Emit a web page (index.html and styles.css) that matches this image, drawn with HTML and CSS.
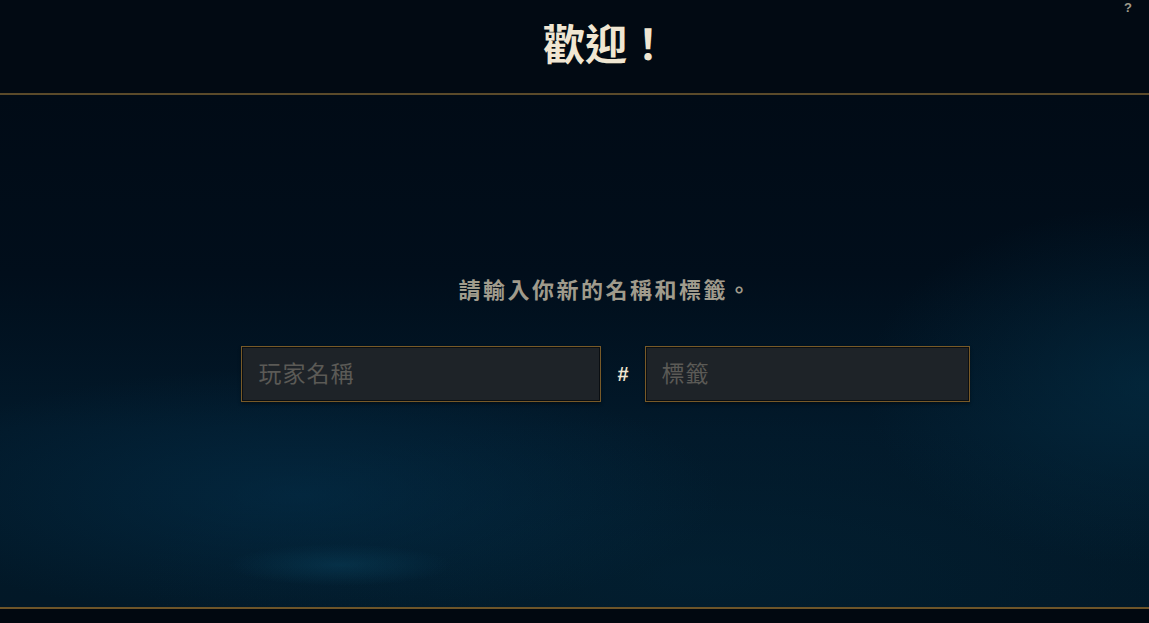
FILE: index.html
```html
<!DOCTYPE html>
<html lang="zh-Hant">
<head>
    <meta charset="UTF-8">
    <meta name="viewport" content="width=device-width, initial-scale=1.0">
    <title>歡迎！</title>
    <link rel="stylesheet" href="styles.css">
</head>
<body>
    <header class="top">
        <h1>歡迎！</h1>
        <button class="help" type="button">?</button>
    </header>
    <main class="stage">
        <p class="hint">請輸入你新的名稱和標籤。</p>
        <form class="id-row">
            <input class="field name" type="text" placeholder="玩家名稱">
            <span class="hash">#</span>
            <input class="field tag" type="text" placeholder="標籤">
        </form>
    </main>
    <footer class="bottom"></footer>
</body>
</html>
```

FILE: styles.css
```css
html, body{
    height: 100%;
}
body{
    margin: 0;
    padding: 0;
    display: flex;
    flex-direction: column;
    background: #010810;
    font-family: "Noto Sans CJK TC", "Noto Sans", sans-serif;
    overflow: hidden;
}
.top{
    position: relative;
    height: 93px;
    flex: none;
    display: flex;
    align-items: center;
    justify-content: center;
    padding-left: 63px;
    background: #020a13;
    border-bottom: 2px solid #5b4a2a;
}
.top h1{
    margin: 0 0 10px;
    font-size: 42px;
    font-weight: 700;
    color: #f0e6d2;
    line-height: 1;
}
.help{
    position: absolute;
    top: 0;
    right: 17px;
    padding: 0;
    background: none;
    border: none;
    color: #a09b8c;
    font-family: "Liberation Sans", sans-serif;
    font-size: 13px;
    font-weight: 700;
    cursor: pointer;
}
.stage{
    flex: 1;
    display: flex;
    flex-direction: column;
    align-items: center;
    padding-left: 62px;
    background:
        radial-gradient(ellipse 160px 30px at 340px 470px, rgba(12, 78, 108, 0.35), transparent 70%),
        radial-gradient(ellipse 560px 170px at 300px 400px, rgba(4, 52, 82, 0.5), transparent 75%),
        radial-gradient(ellipse 380px 240px at 1150px 290px, rgba(4, 50, 74, 0.55), transparent 75%),
        radial-gradient(ellipse 700px 200px at 700px 480px, rgba(3, 38, 58, 0.45), transparent 80%),
        linear-gradient(180deg, #010b16 0%, #010e1b 35%, #02192a 65%, #021827 100%);
    border-bottom: 2px solid #6e5529;
}
.hint{
    margin: 179px 0 0;
    font-size: 22px;
    font-weight: 700;
    letter-spacing: 2.5px;
    color: #a09b8c;
    line-height: 28px;
}
.id-row{
    display: flex;
    align-items: center;
    gap: 16px;
    margin-top: 44px;
}
.field{
    box-sizing: border-box;
    height: 56px;
    padding: 0 16px 5px;
    background: #1e2328;
    border: 1px solid #785a28;
    box-shadow: inset 0 0 0 1px #0a0e12, 0 2px 3px rgba(0, 0, 0, 0.4);
    color: #f0e6d2;
    font-family: "Noto Sans CJK TC", sans-serif;
    font-size: 23px;
    letter-spacing: 1px;
    outline: none;
}
.field::placeholder{
    color: #5b5a56;
}
.name{
    width: 360px;
}
.tag{
    width: 325px;
}
.hash{
    font-family: "Liberation Sans", sans-serif;
    font-size: 20px;
    font-weight: 700;
    color: #f0e6d2;
}
.bottom{
    height: 14px;
    flex: none;
    background: #010810;
}
```
